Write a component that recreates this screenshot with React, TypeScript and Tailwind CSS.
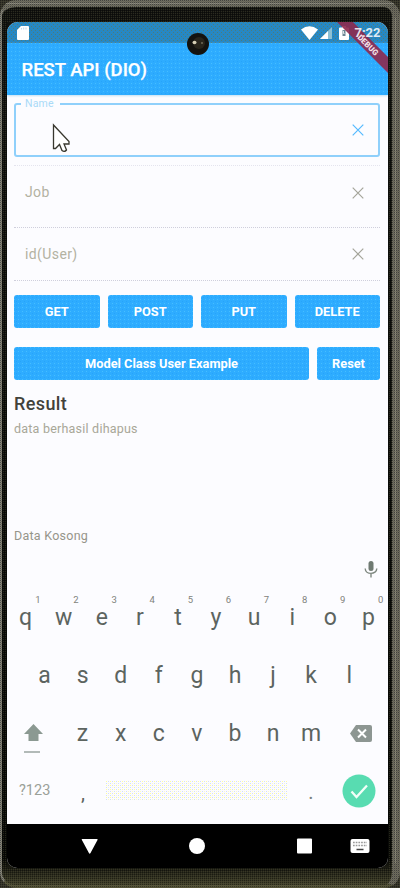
import React from "react";

function Dither() {
  return (
    <svg className="pointer-events-none absolute inset-0 h-full w-full" aria-hidden="true">
      <defs>
        <pattern id="dots" width="4" height="4" patternUnits="userSpaceOnUse">
          <rect x="0" y="0" width="1" height="1" fill="#5fd0ff" />
          <rect x="2" y="2" width="1" height="1" fill="#1f9cf5" />
        </pattern>
      </defs>
      <rect width="100%" height="100%" fill="url(#dots)" opacity="0.5" />
    </svg>
  );
}

function Button({ label, className }: { label: string; className: string }) {
  return (
    <button
      className={
        "relative flex h-[33px] items-center justify-center overflow-hidden rounded-[3px] bg-[#2eacff] pt-px text-[12.8px] font-bold whitespace-nowrap text-white " +
        className
      }
    >
      <Dither />
      <span className="relative">{label}</span>
    </button>
  );
}

function Close({ className }: { className: string }) {
  return (
    <svg className={"h-3 w-3 " + className} viewBox="0 0 12 12" fill="none" stroke="currentColor" strokeWidth="1.2">
      <path d="M.7.7 11.3 11.3M11.3.7.7 11.3" />
    </svg>
  );
}

function Field({ label, className }: { label: string; className: string }) {
  return (
    <div className={"flex h-[54px] items-center justify-between pr-4 pl-[11px] " + className}>
      <span className="text-[14px] tracking-[0.4px] text-[#b3b2a2]">{label}</span>
      <Close className="text-[#a5a59b]" />
    </div>
  );
}

function Key({ letter, hint }: { letter: string; hint?: string }) {
  return (
    <div className="relative flex h-[30px] w-[38.1px] shrink-0 items-center justify-center text-[23px] leading-[30px] text-[#5c6460]">
      {letter}
      {hint && <span className="absolute top-[-9px] right-[4px] text-[9.5px] leading-[12px] text-[#7f827c]">{hint}</span>}
    </div>
  );
}

function StatusBar() {
  return (
    <div className="relative flex h-[21px] shrink-0 items-center justify-between bg-[#2688c4] pr-[8px] pl-[10px]">
      <svg className="pointer-events-none absolute inset-0 h-full w-full">
        <defs>
          <pattern id="statusDots" width="4" height="4" patternUnits="userSpaceOnUse">
            <path d="M0 0h1v1H0zM2 2h1v1H2z" fill="#527a72" />
          </pattern>
        </defs>
        <rect width="100%" height="100%" fill="url(#statusDots)" opacity=".9" />
      </svg>
      <svg className="relative h-[14px] w-3" viewBox="0 0 12 14">
        <path d="M4 0h7q1 0 1 1v12q0 1-1 1H1q-1 0-1-1V4z" fill="#fff" />
        <path d="M4.500 2v1.500M6.700 1.500v2M9 1.500v2" stroke="#b9d7ea" strokeWidth=".9" />
      </svg>
      <div className="relative flex items-center">
        <svg className="mr-[2px] h-[14px] w-[17px]" viewBox="0 0 17 14">
          <path d="M0 3.500Q8.500-3 17 3.500L8.500 14z" fill="#fff" />
        </svg>
        <svg className="mr-[7px] h-3 w-3" viewBox="0 0 12 12">
          <path d="M12 0v12H0z" fill="#8ec0d3" />
          <path d="M8 4v8H0z" fill="#fff" />
        </svg>
        <svg className="mr-[5px] h-[14px] w-[10px]" viewBox="0 0 10 14">
          <path d="M3 0h4v1.500h2q1 0 1 1V13q0 1-1 1H1q-1 0-1-1V2.500q0-1 1-1h2z" fill="#fff" />
          <path d="M3.500 4h3v6h-3z" fill="#6d8794" />
          <path d="M4.500 5v2.500h1" stroke="#fff" strokeWidth=".8" fill="none" />
        </svg>
        <span className="w-[26px]" />
      </div>
    </div>
  );
}

function Keyboard() {
  const numbers = "1234567890";
  return (
    <div className="flex h-[272px] shrink-0 flex-col">
      <div className="flex h-[51px] shrink-0 items-start justify-end pt-[8px] pr-[10px]">
        <svg className="h-[18px] w-[14px]" viewBox="0 0 14 18" fill="none">
          <rect x="4.500" y="1" width="5" height="10" rx="2.500" fill="#6f7a72" />
          <path d="M1.200 8.500C1.200 15 12.800 15 12.800 8.500M7 13.500v4" stroke="#7f8880" strokeWidth="1.400" />
        </svg>
      </div>
      <div className="-ml-[0.5px] flex">
        {"qwertyuiop".split("").map((k, i) => (
          <Key key={k} letter={k} hint={numbers[i]} />
        ))}
      </div>
      <div className="mt-[28px] flex pl-[18.5px]">
        {"asdfghjkl".split("").map((k) => (
          <Key key={k} letter={k} />
        ))}
      </div>
      <div className="mt-[27px] flex items-center">
        <div className="w-[56.5px] shrink-0 pl-[16px]">
          <svg className="relative top-[5px] h-[31px] w-[21px]" viewBox="0 0 21 31">
            <path d="M10.500 1 20 11h-4.500v7h-10v-7H1z" fill="#8b9992" />
            <path d="M1 29h16" stroke="#9aa5a0" strokeWidth="1.500" />
          </svg>
        </div>
        {"zxcvbnm".split("").map((k) => (
          <Key key={k} letter={k} />
        ))}
        <svg className="ml-[20px] h-[17px] w-[22px] shrink-0" viewBox="0 0 22 17">
          <path d="M6 0h14q2 0 2 2v13q0 2-2 2H6L0 8.500z" fill="#8d9692" />
          <path d="m8 4.500 8 8m0-8-8 8" stroke="#fff" strokeWidth="2" />
        </svg>
      </div>
      <div className="mt-[22px] flex h-[40px] items-center">
        <span className="w-[57px] pl-[12px] text-[14.5px] text-[#9aa098]">?123</span>
        <span className="w-[38px] pt-[3px] text-center text-[20px] text-[#5c6460]">,</span>
        <svg className="ml-[4px] h-[20px] w-[181px]">
          <defs>
            <pattern id="space" width="4" height="4" patternUnits="userSpaceOnUse">
              <path d="M0 0h1v1H0z" fill="#ffff9d" />
              <path d="M2 2h1v1H2z" fill="#fbfbc8" />
              <path d="M2 0h1v1H2zM0 2h1v1H0z" fill="#d3def8" />
            </pattern>
          </defs>
          <rect width="181" height="20" fill="url(#space)" />
        </svg>
        <span className="ml-[5px] w-[38px] pt-[2px] text-center text-[20px] text-[#7b807b]">.</span>
        <svg className="ml-[12px] h-[34px] w-[34px]" viewBox="0 0 34 34" fill="none">
          <circle cx="17" cy="17" r="16.500" fill="#58dcb1" />
          <path d="m9.500 17.500 5 5.500L25 11.500" stroke="#f1fff8" strokeWidth="2.300" />
        </svg>
      </div>
    </div>
  );
}

export default function App() {
  return (
    <div className="relative h-[888px] w-[400px] overflow-hidden bg-[#35342a] font-[Roboto,sans-serif]">
      <div className="flex h-full w-full flex-col rounded-[16px] border-t-[7px] border-r-[8px] border-b-[3px] border-l-[2px] border-t-[#706f64] border-r-[#6d6b60] border-b-[#56553a] border-l-[#85847a] bg-gradient-to-b from-[#11120f] via-[#080906] via-[97%] to-[#45442d] pt-[15px] pr-[2px] pl-[5px]">
        <div className="flex h-[846px] w-[381px] shrink-0 flex-col overflow-hidden rounded-t-[11px] rounded-b-[10px] bg-[#fcfcff]">
          <StatusBar />
          <header className="relative flex h-[52px] shrink-0 items-center bg-[#2eacff] pt-[3px] pl-[14.5px] shadow-[0_1px_2px_#c2dff1]">
            <Dither />
            <h1 className="relative text-[18.5px] font-medium text-white [-webkit-text-stroke:0.25px_white]">REST API (DIO)</h1>
          </header>
          <main className="flex h-[457px] shrink-0 flex-col px-[7px] pt-[8px]">
            <div className="relative flex h-[54px] w-[366px] shrink-0 items-center justify-end rounded-[3px] border-2 border-[#8fd0fb] pr-[14px]">
              <span className="absolute top-[-8px] left-[5px] w-[39px] bg-[#fcfcff] pl-[4px] text-[10.5px] leading-[14px] tracking-[0.2px] text-[#a9daf7]">Name</span>
              <Close className="text-[#55baff]" />
            </div>
            <div className="mt-2 w-[366px] shrink-0">
              <Field label="Job" className="border-t border-dotted border-[#e4e4ee]" />
            </div>
            <div className="mt-[8px] w-[366px] shrink-0">
              <Field label="id(User)" className="border-y border-dotted border-[#cfcfdc]" />
            </div>
            <div className="mt-[14px] flex w-[366px] gap-[8px]">
              <Button label="GET" className="flex-1" />
              <Button label="POST" className="flex-1" />
              <Button label="PUT" className="flex-1" />
              <Button label="DELETE" className="flex-1" />
            </div>
            <div className="mt-[19px] flex w-[366px] gap-[8px]">
              <Button label="Model Class User Example" className="w-[295px]" />
              <Button label="Reset" className="flex-1" />
            </div>
            <h2 className="mt-[12px] text-[18px] leading-[24px] font-medium tracking-[0.4px] text-[#42423b]">Result</h2>
            <p className="mt-[4px] text-[12.5px] leading-[18px] tracking-[0.22px] text-[#a8a798]">data berhasil dihapus</p>
            <p className="mt-[89px] text-[12.5px] leading-[18px] tracking-[0.25px] text-[#96958a]">Data Kosong</p>
          </main>
          <Keyboard />
          <nav className="h-[44px] shrink-0 bg-black">
            <svg className="h-[44px] w-[381px]" viewBox="0 0 381 44" fill="#fff">
              <path d="M75 15h15q1 0 .5 1l-7 13q-.8 1.500-1.600 0l-7-13q-.5-1 .1-1z" />
              <circle cx="190" cy="22" r="8" />
              <rect x="290" y="14.500" width="15" height="15" rx="1" />
              <rect x="343.500" y="15" width="19" height="14" rx="2" />
              <path d="M346 18.500h14M346 21.500h14" stroke="#999" strokeWidth="1.700" strokeDasharray="1.700 1" />
              <path d="M349.500 25.500h7" stroke="#444" strokeWidth="1.700" />
            </svg>
          </nav>
        </div>
      </div>
      <svg className="pointer-events-none absolute inset-0 h-full w-full" viewBox="0 0 400 888">
        <defs>
          <pattern id="frameDots" width="2" height="2" patternUnits="userSpaceOnUse">
            <path d="M0 0h1v1H0z" fill="#000" />
            <path d="M1 1h1v1H1z" fill="#55533a" />
          </pattern>
          <clipPath id="screenCorner">
            <path d="M330 22h47q11 0 11 11v45h-58z" />
          </clipPath>
        </defs>
        <path d="M6 3.500h388" stroke="#9b9a91" strokeWidth=".7" />
        <path d="M395.500 18v845" stroke="#89877b" strokeWidth="1" />
        <path d="M0 0h400v888H0zM7 22v846h382V22z" fill="url(#frameDots)" fillRule="evenodd" opacity=".38" />
        <g clipPath="url(#screenCorner)">
          <path d="M337 22h16l36 36v16z" fill="#8e294e" opacity=".9" />
        </g>
        <text x="354.500" y="37" fill="#fff" opacity=".85" fontFamily="Roboto" fontSize="13" fontWeight="700">7:22</text>
        <text x="366" y="47" transform="rotate(45 366 47)" textAnchor="middle" fill="#f1dfe6" fontFamily="Roboto" fontSize="8" fontWeight="900">DEBUG</text>
        <circle cx="198" cy="44" r="11" fill="#14130f" />
        <circle cx="199" cy="43" r="6" fill="#29251b" />
        <ellipse cx="194.500" cy="42.500" rx="2" ry="1.700" fill="#d7d0b5" />
        <circle cx="202" cy="43" r="1" fill="#716b59" />
        <path d="M53.500 125v23.500h2l4-4 2.500 6q2.500 2 4.500-.5l-2.500-6h5v-2.500z" fill="#fff" stroke="#38372e" strokeWidth="1.300" />
      </svg>
    </div>
  );
}
